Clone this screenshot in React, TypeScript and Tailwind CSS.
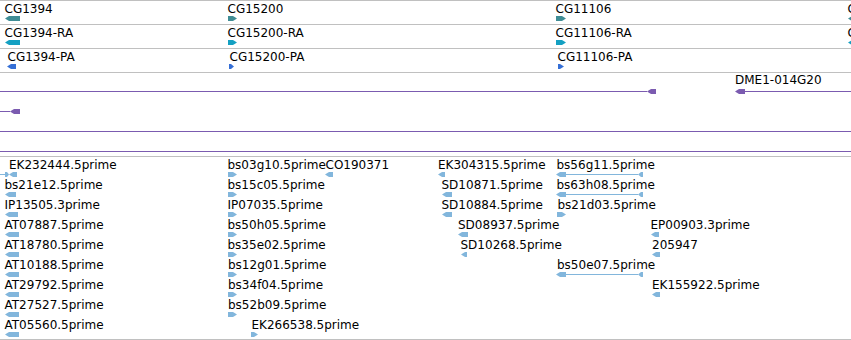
import React from "react";

type Dir = "l" | "r" | "n";
type Seg = [number, number, Dir];
type Feat = {
  label?: string;
  lx?: number;
  row: number;
  segs: Seg[];
  line?: [number, number];
};

const TEAL = "#3f8d95";
const CYAN = "#14a0c2";
const BLUE = "#356fd6";
const PURPLE = "#7b5bb0";
const EST = "#82b6dc";

function segPoints(a: number, b: number, dir: Dir, h: number) {
  const w = b - a;
  const t = Math.min(4, Math.max(1, w - 2));
  const m = h / 2;
  if (dir === "l") return `${a},${m} ${a + t},0 ${b},0 ${b},${h} ${a + t},${h}`;
  if (dir === "r") return `${a},0 ${b - t},0 ${b},${m} ${b - t},${h} ${a},${h}`;
  return `${a},0 ${b},0 ${b},${h} ${a},${h}`;
}

function Glyph({ f, color, top, h = 5 }: { f: Feat; color: string; top: number; h?: number }) {
  const xs = f.segs.flatMap((s) => [s[0], s[1]]).concat(f.line ?? []);
  const x1 = Math.min(...xs);
  const x2 = Math.max(...xs);
  return (
    <svg
      className="absolute"
      style={{ left: x1, top, width: x2 - x1, height: h }}
      viewBox={`${x1} 0 ${x2 - x1} ${h}`}
    >
      {f.line && <rect x={f.line[0]} y={Math.floor(h / 2)} width={f.line[1] - f.line[0]} height={1} fill={color} />}
      {f.segs.map((s, i) => (
        <polygon key={i} points={segPoints(s[0], s[1], s[2], h)} fill={color} />
      ))}
    </svg>
  );
}

function Track({
  feats,
  color,
  labelTop,
  glyphTop,
  pitch = 20,
  h = 5,
  className,
}: {
  feats: Feat[];
  color: string;
  labelTop: number;
  glyphTop: number;
  pitch?: number;
  h?: number;
  className: string;
}) {
  return (
    <div className={`relative border-t border-[#c0c0c0] ${className}`}>
      {feats.map((f, i) => (
        <React.Fragment key={i}>
          {f.label && (
            <div
              className="absolute whitespace-nowrap leading-[14px]"
              style={{ left: f.lx, top: labelTop + f.row * pitch }}
            >
              {f.label}
            </div>
          )}
          <Glyph f={f} color={color} top={glyphTop + f.row * pitch} h={h} />
        </React.Fragment>
      ))}
    </div>
  );
}

const genes: Feat[] = [
  { label: "CG1394", lx: 4.5, row: 0, segs: [[5, 20, "l"]] },
  { label: "CG15200", lx: 227.5, row: 0, segs: [[228, 237, "r"]] },
  { label: "CG11106", lx: 555.5, row: 0, segs: [[556, 566, "r"]] },
  { label: "CG11107", lx: 847.5, row: 0, segs: [[848, 858, "l"]] },
];
const mrna: Feat[] = [
  { label: "CG1394-RA", lx: 4.5, row: 0, segs: [[5, 20, "l"]] },
  { label: "CG15200-RA", lx: 227.5, row: 0, segs: [[228, 237, "r"]] },
  { label: "CG11106-RA", lx: 555.5, row: 0, segs: [[556, 566, "r"]] },
  { label: "CG11107-RA", lx: 847.5, row: 0, segs: [[848, 858, "l"]] },
];
const prot: Feat[] = [
  { label: "CG1394-PA", lx: 7.5, row: 0, segs: [[7, 16, "l"]] },
  { label: "CG15200-PA", lx: 229.5, row: 0, segs: [[229, 234, "r"]] },
  { label: "CG11106-PA", lx: 557.5, row: 0, segs: [[558, 564, "r"]] },
];
const clones: Feat[] = [
  { row: 0, segs: [[647, 656, "l"]], line: [0, 647] },
  { label: "DME1-014G20", lx: 735, row: 0, segs: [[735, 745, "l"]], line: [745, 851] },
  { row: 1, segs: [[10, 20, "l"]], line: [0, 10] },
  { row: 2, segs: [], line: [0, 851] },
  { row: 3, segs: [], line: [0, 851] },
];

const L = (label: string, lx: number, row: number, a: number, b: number): Feat => ({ label, lx, row, segs: [[a, b, "l"]] });
const R = (label: string, lx: number, row: number, a: number, b: number): Feat => ({ label, lx, row, segs: [[a, b, "r"]] });
const S = (label: string, lx: number, row: number): Feat => ({
  label,
  lx,
  row,
  segs: [
    [556, 566, "l"],
    [638, 643, "l"],
  ],
  line: [566, 638],
});

const ests: Feat[] = [
  { label: "EK232444.5prime", lx: 9, row: 0, segs: [[5, 9, "r"], [9, 17, "l"]], line: [0, 5] },
  L("bs21e12.5prime", 4.5, 1, 5, 16),
  L("IP13505.3prime", 4.5, 2, 5, 18),
  L("AT07887.5prime", 4.5, 3, 5, 19),
  L("AT18780.5prime", 4.5, 4, 5, 19),
  L("AT10188.5prime", 4.5, 5, 5, 19),
  L("AT29792.5prime", 4.5, 6, 5, 19),
  L("AT27527.5prime", 4.5, 7, 5, 19),
  L("AT05560.5prime", 4.5, 8, 5, 19),
  R("bs03g10.5prime", 227.5, 0, 228, 237),
  L("CO190371", 325.5, 0, 325, 333),
  R("bs15c05.5prime", 227.5, 1, 228, 237),
  R("IP07035.5prime", 227.5, 2, 228, 237),
  R("bs50h05.5prime", 227.5, 3, 228, 237),
  R("bs35e02.5prime", 227.5, 4, 228, 237),
  R("bs12g01.5prime", 228, 5, 228, 237),
  R("bs34f04.5prime", 228, 6, 228, 237),
  R("bs52b09.5prime", 228, 7, 228, 237),
  R("EK266538.5prime", 251.5, 8, 251, 258),
  L("EK304315.5prime", 438, 0, 438, 445),
  L("SD10871.5prime", 441.5, 1, 442, 452),
  L("SD10884.5prime", 441.5, 2, 442, 452),
  L("SD08937.5prime", 458, 3, 458, 468),
  L("SD10268.5prime", 460.5, 4, 461, 467),
  S("bs56g11.5prime", 556.5, 0),
  S("bs63h08.5prime", 556.5, 1),
  R("bs21d03.5prime", 557.5, 2, 557, 566),
  S("bs50e07.5prime", 557, 5),
  L("EP00903.3prime", 650.5, 3, 651, 659),
  L("205947", 652, 4, 652, 660),
  L("EK155922.5prime", 652, 6, 652, 660),
];

export default function App() {
  return (
    <div className="w-[851px] h-[340px] overflow-hidden bg-white text-[12px] leading-[14px] text-black font-['DejaVu_Sans',sans-serif]">
      <Track className="h-[24px]" feats={genes} color={TEAL} labelTop={1} glyphTop={15} />
      <Track className="h-[24px]" feats={mrna} color={CYAN} labelTop={1} glyphTop={15} />
      <Track className="h-[24px]" feats={prot} color={BLUE} labelTop={1} glyphTop={15} />
      <Track className="h-[84px]" feats={clones} color={PURPLE} labelTop={0} glyphTop={16} />
      <Track className="h-[184px] border-b" feats={ests} color={EST} labelTop={1} glyphTop={15} />
    </div>
  );
}
